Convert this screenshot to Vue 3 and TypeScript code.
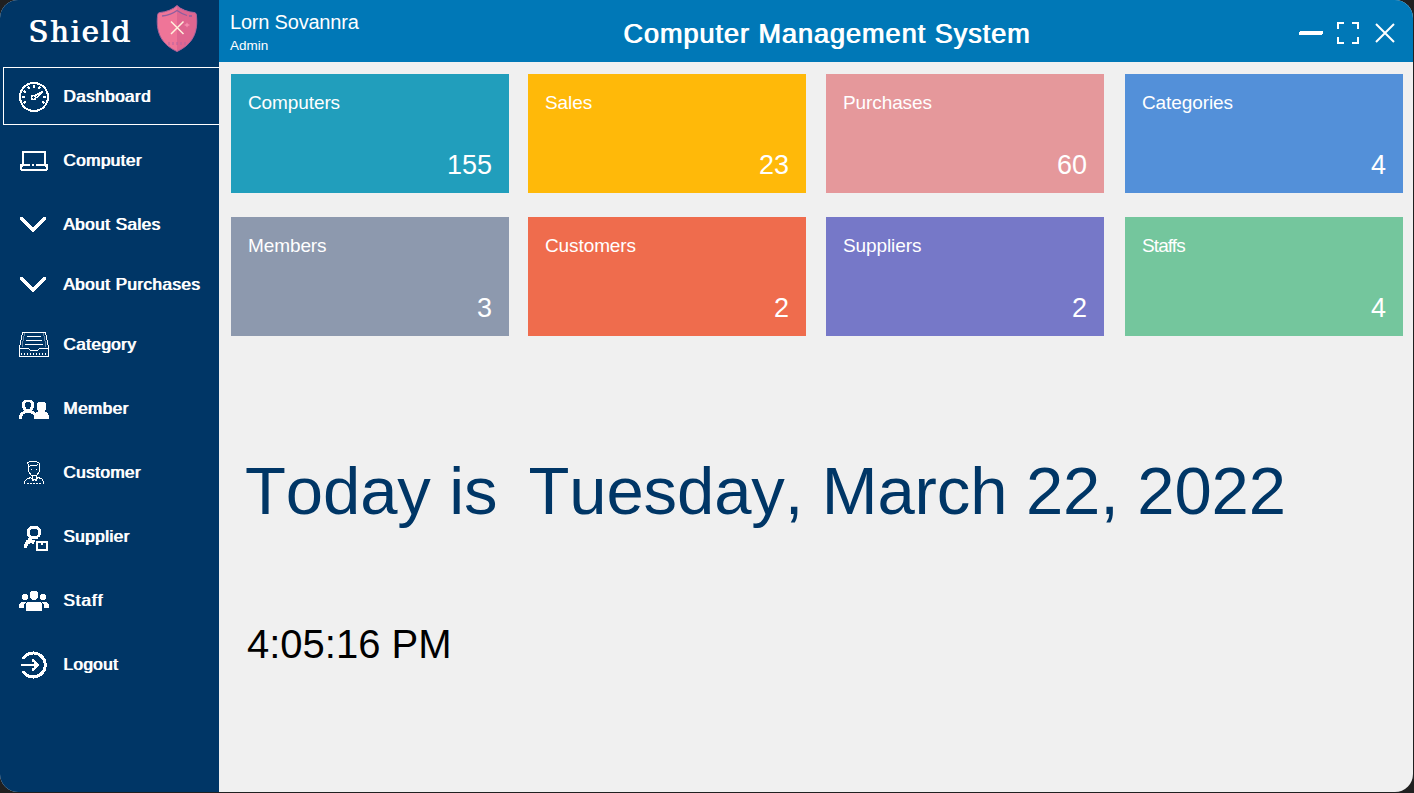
<script setup lang="ts">
interface MenuItem {
  label: string
  icon: string
  active?: boolean
  short?: boolean
  wide?: boolean
}
interface Card {
  label: string
  value: number
  tone: string
}

const menu: MenuItem[] = [
  { label: 'Dashboard', icon: 'gauge', active: true },
  { label: 'Computer', icon: 'laptop' },
  { label: 'About Sales', icon: 'chevron' },
  { label: 'About Purchases', icon: 'chevron', short: true },
  { label: 'Category', icon: 'tray' },
  { label: 'Member', icon: 'members' },
  { label: 'Customer', icon: 'customer' },
  { label: 'Supplier', icon: 'supplier' },
  { label: 'Staff', icon: 'staff', wide: true },
  { label: 'Logout', icon: 'logout' },
]

const cards: Card[] = [
  { label: 'Computers', value: 155, tone: 'teal' },
  { label: 'Sales', value: 23, tone: 'amber' },
  { label: 'Purchases', value: 60, tone: 'pink' },
  { label: 'Categories', value: 4, tone: 'blue' },
  { label: 'Members', value: 3, tone: 'slate' },
  { label: 'Customers', value: 2, tone: 'coral' },
  { label: 'Suppliers', value: 2, tone: 'violet' },
  { label: 'Staffs', value: 4, tone: 'green' },
]

const ticks: number[] = [-120, -90, -60, -30, 0, 30, 90, 120]
</script>

<template>
  <div class="desktop">
    <div class="window">
      <aside class="sidebar">
        <div class="brand">
          <span class="brand-name">Shield</span>
          <svg class="brand-logo" width="42" height="48" viewBox="0 0 42 48">
            <path d="M21 0.500C25 4.500 32 7 38 7.500Q40 7.700 40.300 9.500C42.500 27 37 39 21 46.500C5 39 -0.500 27 1.700 9.500Q2 7.700 4 7.500C10 7 17 4.500 21 0.500Z" fill="#ef7598" />
            <path d="M21 0.500C25 4.500 32 7 38 7.500Q40 7.700 40.300 9.500C42.500 27 37 39 21 46.500Z" fill="#df6690" />
            <path d="M21 0.500C25 4.500 32 7 38 7.500Q40 7.700 40.300 9.500C42.500 27 37 39 21 46.500C5 39 -0.500 27 1.700 9.500Q2 7.700 4 7.500C10 7 17 4.500 21 0.500Z" fill="none" stroke="#a8629a" stroke-width="1" />
            <path d="M6 11Q15 10 21 5.500Q26 9 31 10.500M33 11H36" fill="none" stroke="#8d5f9f" stroke-width="1.300" />
            <path d="M13 37V40M17 37V40M21 37V40M25 37V40M29 37V40" fill="none" stroke="#b565a0" stroke-width="1" />
            <path d="M15 16.500L27.500 29M27.500 16.500L15 29" stroke="#fff0dc" stroke-width="1.500" />
            <path d="M31 17.500L32 19L34 20L32 21L31 22.500L30 21L28 20L30 19Z" fill="#f58cae" />
          </svg>
        </div>
        <nav class="menu">
          <div v-for="item in menu" :key="item.label" class="item" :class="{ active: item.active, short: item.short, wide: item.wide }">
            <svg class="icon" width="32" height="32" viewBox="0 0 32 32" shape-rendering="crispEdges">
              <g v-if="item.icon === 'gauge'" fill="none" stroke="#fff">
                <circle cx="16" cy="17" r="14" stroke-width="2" />
                <path v-for="t in ticks" :key="t" d="M16 5V8" stroke-width="1.800" :transform="`rotate(${t} 16 17)`" />
                <path d="M17 15.500L25 11.500L18.500 18" stroke-width="1.800" />
                <circle cx="15.500" cy="17.500" r="2" stroke-width="1.800" />
              </g>
              <path v-else-if="item.icon === 'laptop'" d="M4 7H28V21H26V9H6V21H4ZM2 20H12V22H5V23H4V25H28V23H27V22H18V20H30V26H29V27H3V26H2ZM14 20H16V22H14Z" fill="#fff" />
              <path v-else-if="item.icon === 'chevron'" d="M2 9H5V10H6V11H7V12H8V13H9V14H10V15H11V16H12V17H13V18H14V19H16V18H17V17H18V16H19V15H20V14H21V13H22V12H23V11H24V10H25V9H28V12H27V13H26V14H25V15H24V16H23V17H22V18H21V19H20V20H19V21H18V22H17V23H16V24H14V23H13V22H12V21H11V20H10V19H9V18H8V17H7V16H6V15H5V14H4V13H3V12H2Z" fill="#fff" />
              <g v-else-if="item.icon === 'tray'" fill="none" stroke="#fff" stroke-width="1">
                <path d="M1.500 28.500V19.500L4.500 4.500H27.500L30.500 19.500V28.500ZM1.500 20.500H10.500L12.500 22.500H19.500L21.500 20.500H30.500" />
                <path d="M4.500 19V16L6.500 5M27.500 19V16L25.500 5" opacity="0.400" />
                <path d="M9 8.500H23M8 12.500H24M7 16.500H25" />
                <path d="M3 25.500H29" stroke-width="2" stroke-dasharray="1 2" />
              </g>
              <g v-else-if="item.icon === 'members'" fill="#fff" fill-rule="evenodd">
                <path d="M6 8H14V9H15V10H16V16H15V18H14V19H16V20H17V21H18V22H17V23H15V22H13V21H7V22H5V24H4V27H1V23H2V21H3V20H5V19H6V18H5V16H4V10H5V9H6ZM8 10V11H7V15H8V17H12V15H13V11H12V10Z" />
                <path d="M20 10H27V11H28V18H27V20H29V21H30V23H31V27H16V23H17V21H18V20H20V18H19V11H20Z" />
              </g>
              <g v-else-if="item.icon === 'customer'" fill="none" stroke="#fff" stroke-width="1">
                <path d="M10.500 11V8.500L9.500 7.500V6.500L12.500 5.500H18.500L21.500 7.500V15.500L18.500 19.500H13.500L10.500 15.500V11.500L12.500 9.500L15.500 10L20.500 8.500" />
                <path d="M13 13.500H14M18 13.500H19M14.500 20V22.500M18.500 20V22.500M13.500 21.500L9.500 22.500L6.500 25.500V28M19.500 21.500L23.500 22.500L25.500 25.500V28M13.500 22L14.500 24.500L16.500 23.500L18.500 24.500L19.500 22" />
                <path d="M9 27.500H24" stroke-dasharray="2 1" />
              </g>
              <g v-else-if="item.icon === 'supplier'" fill="#fff" fill-rule="evenodd">
                <path d="M12 6H20V7H21V8H22V9H23V15H22V17H20V19H12V18H11V17H10V16H9V9H10V8H11V7H12ZM13 9V10H12V15H13V16H19V15H20V10H19V9Z" />
                <path d="M10 18H14V20H17V22H16V24H14V23H12V24H10V26H9V28H6V24H7V22H8V20H10Z" />
                <path d="M18 21H30V31H18ZM20 23V29H28V23H25V25H23V23Z" />
              </g>
              <g v-else-if="item.icon === 'staff'" fill="#fff">
                <path d="M13 7H19V8H20V14H19V15H18V16H14V15H13V14H12V8H13ZM5 10H9V11H10V15H9V16H5V15H4V11H5ZM23 10H27V11H28V15H27V16H23V15H22V11H23Z" />
                <path d="M9 18H23V19H24V27H8V19H9ZM3 18H8V19H7V20H6V24H1V20H2V19H3ZM24 18H29V19H30V20H31V24H26V20H25V19H24Z" />
              </g>
              <g v-else fill="none" stroke="#fff">
                <path d="M4.800 11A12 12 0 1 1 4.800 23" stroke-width="3" />
                <path d="M3 17H20" stroke-width="2" />
                <path d="M14 11H16V12H17V13H18V14H19V15H20V16H21V18H20V19H19V20H18V21H17V22H16V23H14V20H16V14H14Z" fill="#fff" stroke="none" />
              </g>
            </svg>
            <span class="label">{{ item.label }}</span>
          </div>
        </nav>
      </aside>

      <main class="main">
        <header class="topbar">
          <div class="user">
            <span class="user-name">Lorn Sovannra</span>
            <span class="user-role">Admin</span>
          </div>
          <h1 class="title">Computer Management System</h1>
          <div class="controls">
            <svg width="24" height="24" viewBox="0 0 24 24" shape-rendering="crispEdges">
              <path d="M1 9H24V12H23V13H0V10H1Z" fill="#fff" />
            </svg>
            <svg width="22" height="22" viewBox="0 0 22 22" shape-rendering="crispEdges">
              <path d="M1 7V1H7M15 1H21V7M21 15V21H15M7 21H1V15" fill="none" stroke="#fff" stroke-width="2" />
            </svg>
            <svg width="20" height="20" viewBox="0 0 20 20">
              <path d="M1 1L19 19M19 1L1 19" stroke="#fff" stroke-width="2" />
            </svg>
          </div>
        </header>
        <section class="cards">
          <article v-for="card in cards" :key="card.label" class="card" :class="card.tone">
            <span class="card-label">{{ card.label }}</span>
            <span class="card-value">{{ card.value }}</span>
          </article>
        </section>
        <section class="clock">
          <div class="date"><span>Today is</span><span>Tuesday, March 22, 2022</span></div>
          <div class="time">4:05:16 PM</div>
        </section>
      </main>
    </div>
  </div>
</template>

<style>
body {
  margin: 0;
  background: #202020;
}
</style>

<style scoped>
.desktop {
  box-sizing: border-box;
  width: 1414px;
  height: 793px;
  padding: 0 1px 1px 0;
  background: #202020;
  overflow: hidden;
  font-family: "Liberation Sans", Arial, sans-serif;
}
.window {
  display: flex;
  height: 792px;
  border-radius: 18px;
  overflow: hidden;
  background: #f0f0f0;
}
.sidebar {
  width: 219px;
  flex: none;
  background: #003666;
  color: #fff;
}
.brand {
  display: flex;
  height: 64px;
  padding-left: 28px;
}
.brand-name {
  width: 128px;
  font: 29px/64px "DejaVu Serif", serif;
  letter-spacing: 1.8px;
  text-shadow: 1px 0 0 #fff;
}
.brand-logo {
  margin-top: 5px;
}
.item {
  box-sizing: border-box;
  display: flex;
  align-items: center;
  gap: 13px;
  height: 64px;
  padding-left: 18px;
}
.item.short {
  height: 56px;
}
.item.active {
  height: 58px;
  margin: 3px 0 3px 3px;
  padding-left: 14px;
  border: 1px solid #fff;
  border-right: 0;
}
.icon {
  flex: none;
}
.label {
  padding-top: 2px;
  font-size: 17px;
  font-kerning: none;
  line-height: 20px;
  letter-spacing: 0.5px;
  text-shadow: 1px 0 0 #fff;
  white-space: nowrap;
}
.wide .label {
  letter-spacing: 1px;
}
.main {
  flex: 1;
  min-width: 0;
}
.topbar {
  display: flex;
  height: 62px;
  background: #0078b7;
  color: #fff;
}
.user {
  display: flex;
  flex-direction: column;
  width: 393px;
  padding: 11px 0 0 11px;
}
.user-name {
  font-size: 20px;
  line-height: 22px;
  letter-spacing: -0.2px;
}
.user-role {
  font-size: 13.5px;
  line-height: 16px;
  padding-top: 5px;
}
.title {
  width: 676px;
  margin: 0;
  font-size: 27px;
  font-weight: 400;
  line-height: 68px;
  letter-spacing: 1px;
  text-shadow: 1px 0 0 #fff;
  white-space: nowrap;
}
.controls {
  display: flex;
  align-items: flex-start;
  gap: 14px;
  padding-top: 22px;
}
.controls svg:last-child {
  margin-top: 1px;
  margin-left: 2px;
}
.cards {
  display: grid;
  grid-template-columns: 297px 298px 299px 278px;
  grid-auto-rows: 119px;
  row-gap: 24px;
  padding: 12px 0 0 12px;
}
.card {
  box-sizing: border-box;
  display: flex;
  flex-direction: column;
  justify-content: space-between;
  width: 278px;
  padding: 18px 17px 13px;
  color: #fff;
}
.card-label {
  font-size: 19px;
  line-height: 22px;
  letter-spacing: -0.1px;
}
.card.green .card-label {
  letter-spacing: -0.9px;
}
.card-value {
  font-size: 27px;
  line-height: 30px;
  text-align: right;
}
.teal { background: #219ebc; }
.amber { background: #ffb909; }
.pink { background: #e5989b; }
.blue { background: #5390d9; }
.slate { background: #8d99ae; }
.coral { background: #ef6c4d; }
.violet { background: #7678c8; }
.green { background: #74c69d; }
.clock {
  padding: 117px 0 0 26px;
}
.date {
  display: flex;
  gap: 31px;
  color: #003666;
  font-size: 67px;
  font-kerning: none;
  letter-spacing: -0.1px;
  line-height: 76px;
  white-space: nowrap;
}
.time {
  margin-top: 92px;
  padding-left: 2px;
  font-size: 40px;
  line-height: 46px;
  color: #000;
}
</style>
